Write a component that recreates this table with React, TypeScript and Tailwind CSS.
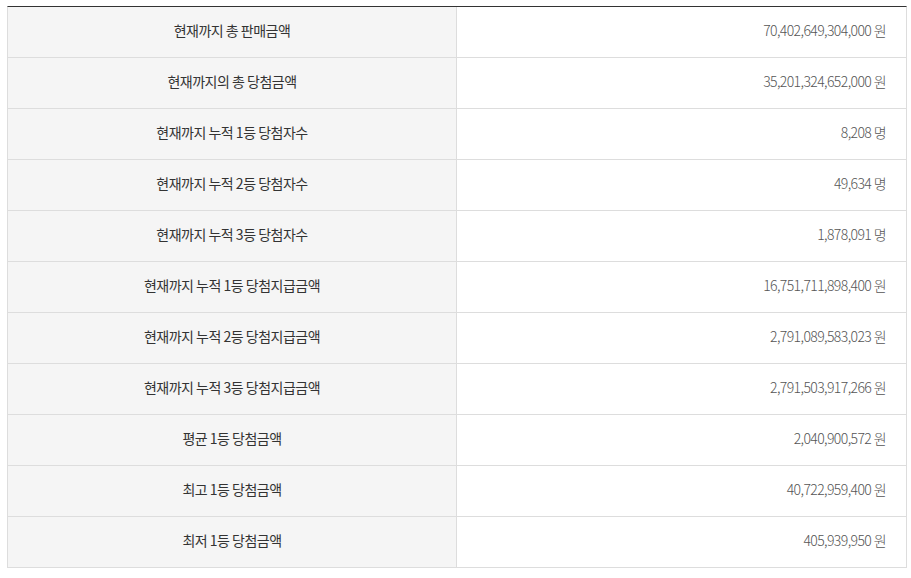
import React from "react";

const rows: [string, string][] = [
  ["현재까지 총 판매금액", "70,402,649,304,000 원"],
  ["현재까지의 총 당첨금액", "35,201,324,652,000 원"],
  ["현재까지 누적 1등 당첨자수", "8,208 명"],
  ["현재까지 누적 2등 당첨자수", "49,634 명"],
  ["현재까지 누적 3등 당첨자수", "1,878,091 명"],
  ["현재까지 누적 1등 당첨지급금액", "16,751,711,898,400 원"],
  ["현재까지 누적 2등 당첨지급금액", "2,791,089,583,023 원"],
  ["현재까지 누적 3등 당첨지급금액", "2,791,503,917,266 원"],
  ["평균 1등 당첨금액", "2,040,900,572 원"],
  ["최고 1등 당첨금액", "40,722,959,400 원"],
  ["최저 1등 당첨금액", "405,939,950 원"],
];

export default function App() {
  return (
    <div
      className="bg-white pl-[7px] pt-[6px] w-[911px] h-[578px]"
      style={{ fontFamily: '"Noto Sans CJK KR", "Noto Sans", sans-serif' }}
    >
      <div className="w-[900px] border-t border-t-[#333] border-l border-r border-[#ddd]">
        {rows.map(([label, value], i) => (
          <div key={i} className="grid grid-cols-[449px_1fr] h-[51px] border-b border-[#ddd]">
            <div className="bg-[#f5f5f5] border-r border-[#ddd] flex items-center justify-center pb-[3px] text-[14px] text-[#333] tracking-[-0.5px]">
              {label}
            </div>
            <div className="flex items-center justify-end pr-[20px] pb-[3px] text-[14px] font-light text-[#555] tracking-[-0.6px]">
              {value}
            </div>
          </div>
        ))}
      </div>
    </div>
  );
}
